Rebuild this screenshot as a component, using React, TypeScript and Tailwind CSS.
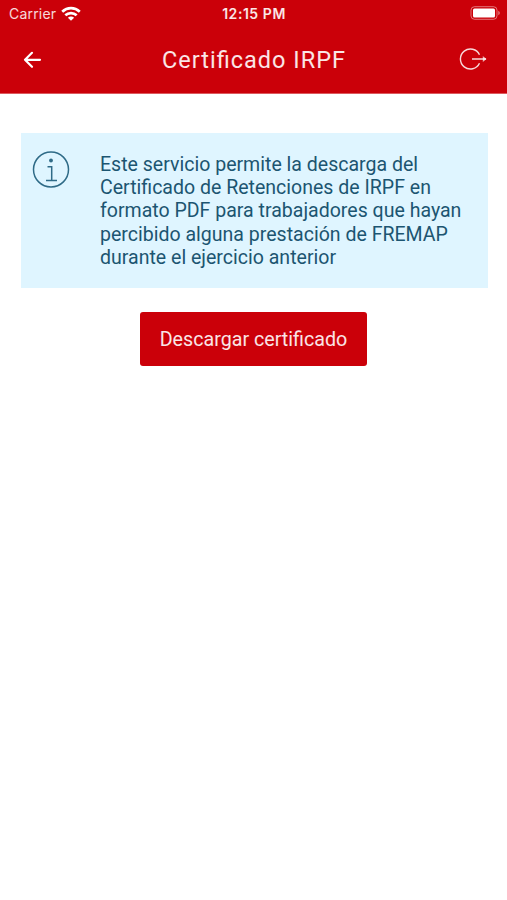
function StatusBar() {
  return (
    <div className="flex h-7 items-center justify-between pl-[9px] pr-[6px] font-['Inter',sans-serif]">
      <div className="flex w-[160px] items-center gap-[5px]">
        <span className="text-[14px] leading-4 tracking-[0.200px] text-white/85">Carrier</span>
        <svg width="20" height="15" viewBox="0 0 18 14" fill="none" stroke="white" strokeWidth="2.500" className="-mt-[2px]">
          <path d="M.8 5.3C5.5.9 12.500.9 17.200 5.300" />
          <path d="M3.700 8.700c3-2.800 7.600-2.800 10.600 0" />
          <path d="M6.100 10.900c1.700-1.500 4.100-1.500 5.800 0L9 13.800z" fill="white" stroke="none" />
        </svg>
      </div>
      <span className="-ml-[2px] text-[14px] font-semibold leading-4 tracking-[0.550px] text-white/90">12:15 PM</span>
      <div className="flex w-[160px] justify-end">
        <svg width="31" height="14" viewBox="0 0 31 14" fill="none" className="-mt-[2px]">
          <rect x="1" y=".7" width="26" height="12.600" rx="3.500" stroke="white" strokeOpacity=".45" />
          <rect x="3" y="2.500" width="22" height="9" rx="1.500" fill="white" />
          <path d="M28.300 4.800c2 .8 2 3.600 0 4.400z" fill="white" fillOpacity=".5" />
        </svg>
      </div>
    </div>
  );
}

function Header() {
  return (
    <header className="h-[94px] border-b border-[#dc5a5f] bg-[#cb0009]">
      <StatusBar />
      <div className="flex h-[63px] items-center justify-between pl-[23px] pr-[19px]">
        <button aria-label="Volver" className="flex w-[60px]">
          <svg width="20" height="18" viewBox="0 0 20 18" fill="none" stroke="white" strokeWidth="2.200" strokeLinecap="round" strokeLinejoin="round">
            <path d="M9 1.800 2 8.800l7 7M2 8.800h15" />
          </svg>
        </button>
        <h1 className="-ml-[3px] text-[23.500px] leading-7 tracking-[1px] text-white/90 [font-feature-settings:'liga'_1]">
          Certificado IRPF
        </h1>
        <button aria-label="Salir" className="-mt-[2px] flex w-[60px] justify-end">
          <svg width="30" height="24" viewBox="0 0 30 24" fill="none" stroke="white" strokeOpacity=".85" strokeWidth="1.400">
            <path d="M21.500 7.800A10 10 0 1 0 21.500 16.200M14 12h14" />
            <path d="m24.800 9 3.700 3-3.700 3z" fill="white" fillOpacity=".7" stroke="none" />
          </svg>
        </button>
      </div>
    </header>
  );
}

function InfoIcon() {
  return (
    <svg width="38" height="38" viewBox="0 0 38 38" fill="none" stroke="#2f6b87" strokeWidth="1.500" className="shrink-0">
      <circle cx="19" cy="18.500" r="17.500" />
      <path d="M15.500 15.800h4.200V29.500M14 29.500h11" />
      <circle cx="19" cy="9.500" r="1.900" fill="#2f6b87" stroke="none" />
    </svg>
  );
}

export default function App() {
  return (
    <div className="min-h-[900px] w-[507px] bg-white font-['Roboto',sans-serif]">
      <Header />
      <main className="flex flex-col items-center pl-[21px] pr-[19px] pt-[39px]">
        <section className="flex h-[155px] w-[467px] gap-[30px] bg-[#dff5ff] pl-[11px] pt-[18px]">
          <InfoIcon />
          <p className="mt-[2px] whitespace-nowrap text-[19.550px] leading-[23.200px] text-[#1c5571]">
            Este servicio permite la descarga del<br />
            Certificado de Retenciones de IRPF en<br />
            formato PDF para trabajadores que hayan<br />
            percibido alguna prestación de FREMAP<br />
            durante el ejercicio anterior
          </p>
        </section>
        <button className="mr-[2px] mt-[24px] h-[54px] w-[227px] rounded-[3px] bg-[#cb0009] pt-[1px] text-[19.700px] text-white/90">
          Descargar certificado
        </button>
      </main>
    </div>
  );
}
